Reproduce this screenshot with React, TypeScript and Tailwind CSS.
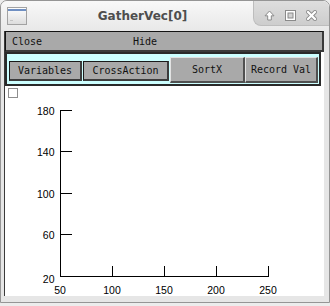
export default function App() {
  const yTicks = [
    { v: "180", y: 110.5, b: 114.5 },
    { v: "140", y: 151.5, b: 155.7 },
    { v: "100", y: 193.5, b: 197.5 },
    { v: "60", y: 234.5, b: 239.2 },
    { v: "20", y: 276.5, b: 283 },
  ];
  const xTicks = [
    { v: "50", x: 60.5 },
    { v: "100", x: 112.5 },
    { v: "150", x: 164.5 },
    { v: "200", x: 216.5 },
    { v: "250", x: 268.5 },
  ];
  const mono = "font-['DejaVu_Sans_Mono',monospace] text-[10px] text-[#111111] leading-none";
  return (
    <div className="w-[330px] h-[306px] bg-[#ececec] overflow-hidden">
      <div className="w-[330px] h-[303px] border border-[#959595] rounded-t-[7px] bg-[#e6e6e6] flex flex-col overflow-hidden">
        {/* title bar */}
        <div className="h-[30px] flex items-center bg-gradient-to-b from-[#f8f8f8] to-[#e8e8e8]">
          <div className="w-[31px] pl-[6px] flex items-center">
            <svg width="20" height="18" viewBox="0 0 20 18">
              <defs>
                <linearGradient id="wi" x1="0" y1="0" x2="0" y2="1">
                  <stop offset="0" stopColor="#ffffff" />
                  <stop offset="1" stopColor="#dcdcdc" />
                </linearGradient>
              </defs>
              <rect x="0.5" y="0.5" width="19" height="17" fill="url(#wi)" stroke="#a2a2a2" />
              <rect x="1" y="2" width="18" height="2" fill="#6f8fc2" />
              <rect x="3" y="13" width="3" height="1" fill="#c4c4c4" />
            </svg>
          </div>
          <div className="flex-1 text-center font-['DejaVu_Sans',sans-serif] font-bold text-[12px] text-[#4e4e4e] leading-none">
            GatherVec[0]
          </div>
          <div className="self-start h-[25px] w-[76px] rounded-bl-[8px] rounded-tr-[6px] bg-gradient-to-b from-[#dedede] to-[#cdcdcd] border-l border-b border-[#bdbdbd] flex items-center pl-[10px] gap-[10px] pt-[4px]">
            <svg width="11" height="11" viewBox="0 0 11 11">
              <path d="M5.5 1 L10 5.8 L7.3 5.8 L7.3 10 L3.7 10 L3.7 5.8 L1 5.8 Z" fill="#ffffff" stroke="#8a8a8a" strokeWidth="1" strokeLinejoin="round" />
            </svg>
            <svg width="11" height="11" viewBox="0 0 11 11">
              <rect x="0.5" y="0.5" width="10" height="10" fill="#ffffff" stroke="#8a8a8a" />
              <rect x="3" y="3" width="5" height="5" fill="#d2d2d2" stroke="#8a8a8a" />
            </svg>
            <svg width="11" height="11" viewBox="0 0 11 11">
              <path d="M2 2 L9 9 M9 2 L2 9" stroke="#8a8a8a" strokeWidth="4" strokeLinecap="square" />
              <path d="M2 2 L9 9 M9 2 L2 9" stroke="#ffffff" strokeWidth="2.2" strokeLinecap="square" />
            </svg>
          </div>
        </div>
        {/* content */}
        <div className="ml-[3px] w-[320px] h-[265px] border-l border-[#3a3a3a] bg-white flex flex-col">
          {/* menubar */}
          <div className={`h-[21px] bg-[#a9a9a9] border-t border-l border-[#141414] border-b-2 border-r-2 border-b-[#3a3a3a] border-r-[#3a3a3a] flex items-center pl-[6px] pt-[1px] ${mono}`}>
            <span className="w-[121px]">Close</span>
            <span>Hide</span>
          </div>
          {/* button frame */}
          <div className="h-[34px] mr-[3px] border-2 border-[#2a2a2a] bg-[#ccffff] flex items-start pl-[2px]">
            <div className={`mt-[7px] w-[73px] h-[20px] bg-[#a9a9a9] border-t border-l border-[#1a1a1a] border-r-2 border-b-2 border-r-[#3c3c3c] border-b-[#3c3c3c] flex items-center justify-center ${mono}`}>
              Variables
            </div>
            <div className={`mt-[7px] ml-[1px] w-[86px] h-[20px] bg-[#a9a9a9] border-t border-l border-[#1a1a1a] border-r-2 border-b-2 border-r-[#3c3c3c] border-b-[#3c3c3c] flex items-center justify-center ${mono}`}>
              CrossAction
            </div>
            <div className={`mt-[3px] ml-[1px] w-[75px] h-[26px] bg-[#a9a9a9] border-t border-l border-[#e2e2e2] border-r-2 border-b-2 border-r-[#505050] border-b-[#505050] flex items-center justify-center ${mono}`}>
              SortX
            </div>
            <div className={`mt-[3px] w-[73px] h-[26px] bg-[#a9a9a9] border-t border-l border-[#e2e2e2] border-r-2 border-b-2 border-r-[#505050] border-b-[#505050] flex items-center justify-center ${mono}`}>
              Record Val
            </div>
          </div>
          {/* plot area */}
          <div className="flex-1 flex flex-col bg-white">
            <div className="ml-[3px] mt-[2px] w-[10px] h-[10px] border border-[#8e8e8e] bg-white" />
            <svg width="319" height="198" viewBox="5 98 319 198" className="block">
              <g stroke="#000000" strokeWidth="1" fill="none" shapeRendering="crispEdges">
                <line x1="60.5" y1="110" x2="60.5" y2="277" />
                <line x1="60" y1="276.5" x2="269" y2="276.5" />
                {yTicks.map((t) => (
                  <line key={t.v} x1="60" y1={t.y} x2="72" y2={t.y} />
                ))}
                {xTicks.slice(1).map((t) => (
                  <line key={t.v} x1={t.x} y1="266" x2={t.x} y2="277" />
                ))}
              </g>
              <g fill="#000000" fontFamily="'Liberation Sans', Arial, sans-serif" fontSize="10.5">
                {yTicks.map((t) => (
                  <text key={t.v} x="54.5" y={t.b} textAnchor="end">
                    {t.v}
                  </text>
                ))}
                {xTicks.map((t) => (
                  <text key={t.v} x={t.x - 0.5} y="294.3" textAnchor="middle">
                    {t.v}
                  </text>
                ))}
              </g>
            </svg>
          </div>
        </div>
      </div>
    </div>
  );
}
